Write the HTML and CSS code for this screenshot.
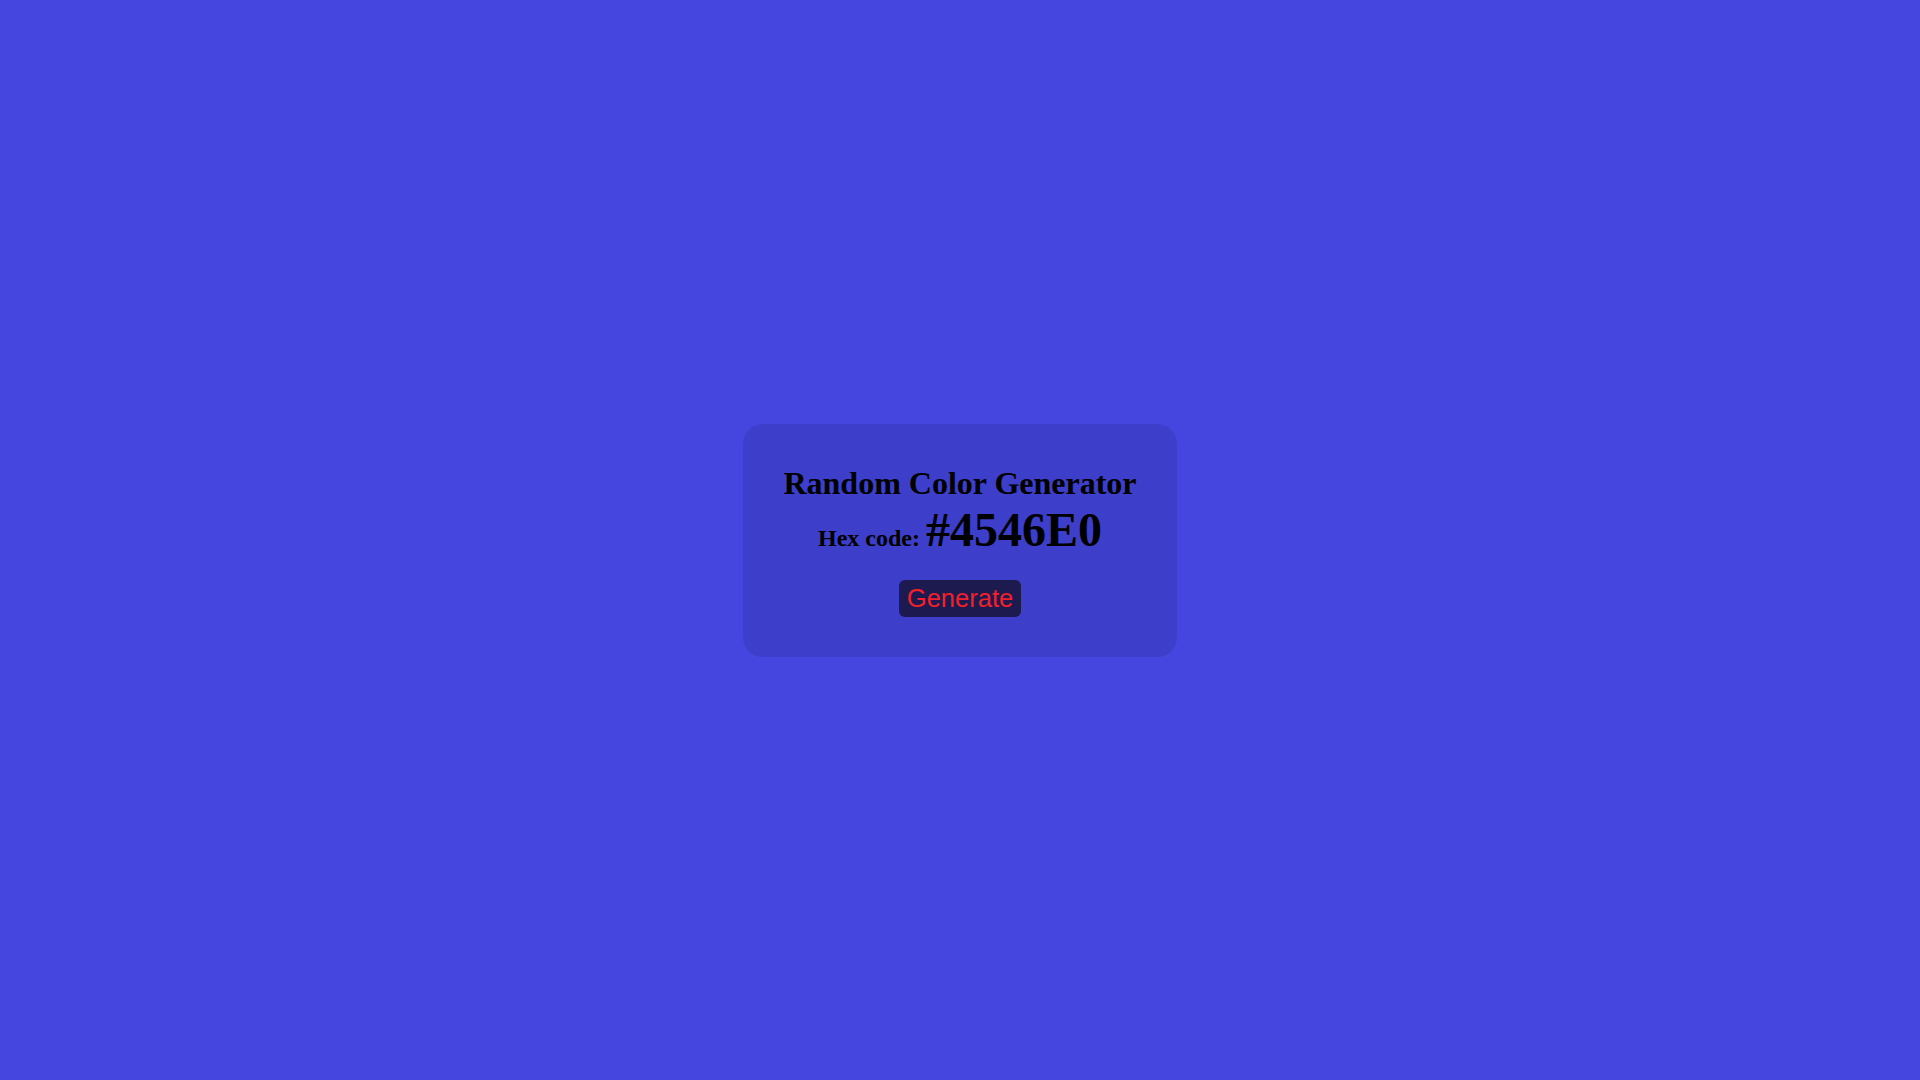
FILE: index.html
```html
<!DOCTYPE html>
<html lang="en">
<head>
<meta charset="utf-8">
<title>Random Color Generator</title>
<link rel="stylesheet" href="styles.css">
</head>
<body>
<main class="page">
  <section class="card">
    <h1 class="title">Random Color Generator</h1>
    <p class="hex">Hex code: <span class="hex-value">#4546E0</span></p>
    <button class="generate" type="button">Generate</button>
  </section>
</main>
</body>
</html>
```

FILE: styles.css
```css
html, body {
  margin: 0;
  padding: 0;
  height: 100%;
}

body {
  background: #4546e0;
  font-family: "Liberation Serif", "Times New Roman", serif;
  color: #000;
}

.page {
  height: 100vh;
  display: flex;
  align-items: center;
  justify-content: center;
}

.card {
  background: rgba(0, 0, 0, 0.1);
  border-radius: 20px;
  padding: 41px 40px 40px;
  display: flex;
  flex-direction: column;
  align-items: center;
  text-align: center;
}

.title {
  margin: 0;
  font-size: 32px;
  font-weight: bold;
}

.hex {
  margin: 0;
  font-size: 24px;
  font-weight: bold;
}

.hex-value {
  font-size: 48px;
}

.generate {
  margin-top: 23px;
  font-family: "Liberation Sans", Arial, sans-serif;
  font-size: 25.5px;
  color: #f2202a;
  background: #1c1a4f;
  border: 0;
  border-radius: 6px;
  padding: 4px 8px;
  line-height: normal;
  cursor: pointer;
}
```
